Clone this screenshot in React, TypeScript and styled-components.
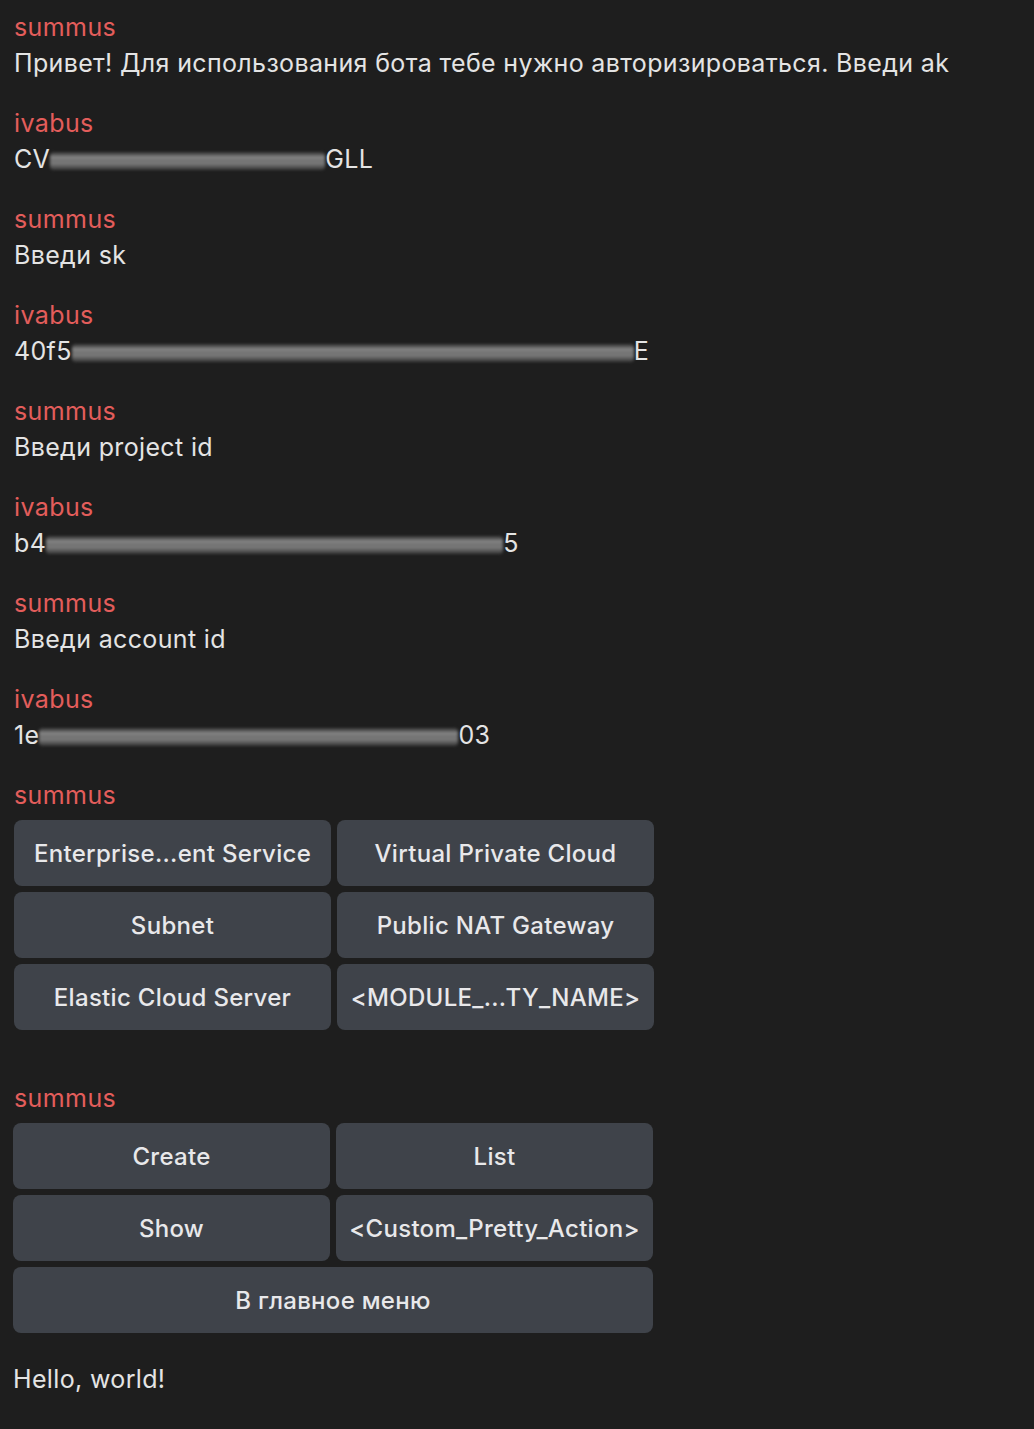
import React from "react";
import styled, { createGlobalStyle } from "styled-components";

const Global = createGlobalStyle`
  html, body {
    margin: 0;
    padding: 0;
    background: #1e1e1e;
  }
  body {
    font-family: Inter, "Noto Sans", "DejaVu Sans", sans-serif;
    -webkit-font-smoothing: antialiased;
  }
`;

const Chat = styled.div`
  display: flex;
  flex-direction: column;
  padding: 9px 0 0 14px;
  min-height: 1429px;
  box-sizing: border-box;
  background: #1e1e1e;
`;

const Message = styled.div<{ $gap?: number }>`
  display: flex;
  flex-direction: column;
  margin-bottom: ${(p) => p.$gap ?? 24}px;
`;

const Author = styled.div`
  color: #e35d5b;
  font-size: 25px;
  line-height: 36px;
  letter-spacing: 0.4px;
`;

const Text = styled.div`
  color: #e4e4e4;
  font-size: 25px;
  line-height: 36px;
  letter-spacing: 0.35px;
  white-space: nowrap;
  display: flex;
  align-items: center;
`;

const Blur = styled.span<{ $w: number }>`
  display: inline-block;
  width: ${(p) => p.$w}px;
  height: 18px;
  margin-top: 3px;
  border-radius: 4px;
  background: linear-gradient(
    180deg,
    #3a3a3a 0%,
    #6e6e6e 18%,
    #a0a0a0 30%,
    #7c7c7c 45%,
    #8e8e8e 62%,
    #6a6a6a 78%,
    #3c3c3c 100%
  );
  filter: blur(1.5px);
  opacity: 0.85;
`;

const Keyboard = styled.div<{ $shift?: number }>`
  display: grid;
  grid-template-columns: 317px 317px;
  gap: 6px;
  margin-top: 7px;
  margin-left: ${(p) => p.$shift ?? 0}px;
`;

const Key = styled.div<{ $wide?: boolean }>`
  grid-column: ${(p) => (p.$wide ? "1 / span 2" : "auto")};
  height: 66px;
  border-radius: 8px;
  background: #3f434a;
  color: #e8e8ea;
  font-size: 24px;
  font-weight: 500;
  display: flex;
  align-items: center;
  justify-content: center;
  white-space: nowrap;
  letter-spacing: 0.3px;
`;

const Plain = styled.div`
  color: #e4e4e4;
  font-size: 25px;
  line-height: 36px;
  letter-spacing: 0.35px;
  margin-left: -1px;
`;

type Secret = { head: string; blur: number; tail: string };

const secrets: Record<string, Secret> = {
  ak: { head: "CV", blur: 275, tail: "GLL" },
  sk: { head: "40f5", blur: 562, tail: "E" },
  pid: { head: "b4", blur: 457, tail: "5" },
  aid: { head: "1e", blur: 419, tail: "03" },
};

const SecretText = ({ s }: { s: Secret }) => (
  <Text>
    {s.head}
    <Blur $w={s.blur} />
    {s.tail}
  </Text>
);

const services = [
  "Enterprise...ent Service",
  "Virtual Private Cloud",
  "Subnet",
  "Public NAT Gateway",
  "Elastic Cloud Server",
  "<MODULE_...TY_NAME>",
];

const actions = ["Create", "List", "Show", "<Custom_Pretty_Action>"];

export default function App() {
  return (
    <>
      <Global />
      <Chat>
        <Message>
          <Author>summus</Author>
          <Text>
            Привет! Для использования бота тебе нужно авторизироваться. Введи ak
          </Text>
        </Message>
        <Message>
          <Author>ivabus</Author>
          <SecretText s={secrets.ak} />
        </Message>
        <Message>
          <Author>summus</Author>
          <Text>Введи sk</Text>
        </Message>
        <Message>
          <Author>ivabus</Author>
          <SecretText s={secrets.sk} />
        </Message>
        <Message>
          <Author>summus</Author>
          <Text>Введи project id</Text>
        </Message>
        <Message>
          <Author>ivabus</Author>
          <SecretText s={secrets.pid} />
        </Message>
        <Message>
          <Author>summus</Author>
          <Text>Введи account id</Text>
        </Message>
        <Message>
          <Author>ivabus</Author>
          <SecretText s={secrets.aid} />
        </Message>
        <Message $gap={50}>
          <Author>summus</Author>
          <Keyboard>
            {services.map((s) => (
              <Key key={s}>{s}</Key>
            ))}
          </Keyboard>
        </Message>
        <Message $gap={28}>
          <Author>summus</Author>
          <Keyboard $shift={-1}>
            {actions.map((a) => (
              <Key key={a}>{a}</Key>
            ))}
            <Key $wide>В главное меню</Key>
          </Keyboard>
        </Message>
        <Plain>Hello, world!</Plain>
      </Chat>
    </>
  );
}
